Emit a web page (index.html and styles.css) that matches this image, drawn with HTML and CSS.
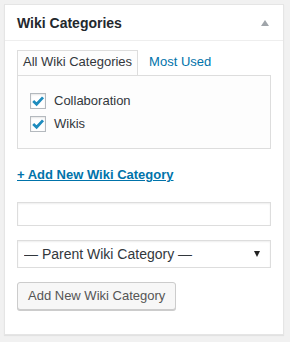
FILE: index.html
```html
<!DOCTYPE html>
<html lang="en">
<head>
    <meta charset="UTF-8">
    <meta name="viewport" content="width=device-width, initial-scale=1.0">
    <title>Wiki Categories</title>
    <link rel="stylesheet" href="styles.css">
</head>
<body>
    <div class="postbox">
        <div class="postbox-header">
            <h2>Wiki Categories</h2>
            <span class="toggle-arrow"></span>
        </div>

        <div class="inside">
            <ul class="category-tabs">
                <li class="tab active">All Wiki Categories</li>
                <li class="tab"><a href="#">Most Used</a></li>
            </ul>

            <div class="tabs-panel">
                <ul class="category-list">
                    <li>
                        <span class="check">
                            <svg width="14" height="14" viewBox="0 0 14 14"><path d="M2.2 7 L5.6 10.2 L12 3.4" fill="none" stroke="#1e8cbe" stroke-width="2.8"/></svg>
                        </span>
                        Collaboration
                    </li>
                    <li>
                        <span class="check">
                            <svg width="14" height="14" viewBox="0 0 14 14"><path d="M2.2 7 L5.6 10.2 L12 3.4" fill="none" stroke="#1e8cbe" stroke-width="2.8"/></svg>
                        </span>
                        Wikis
                    </li>
                </ul>
            </div>

            <a class="add-toggle" href="#">+ Add New Wiki Category</a>

            <input type="text" class="new-category">

            <div class="select-wrap">
                <select class="parent-select">
                    <option>— Parent Wiki Category —</option>
                </select>
            </div>

            <button class="button">Add New Wiki Category</button>
        </div>
    </div>
</body>
</html>
```

FILE: styles.css
```css
body {
    margin: 0;
    padding: 4px 6px 6px 4px;
    background-color: #f1f1f1;
    font-family: "Liberation Sans", Arial, sans-serif;
    font-size: 13px;
    color: #32373c;
}
.postbox {
    width: 278px;
    background-color: #fff;
    border: 1px solid #e5e5e5;
    box-shadow: 0 1px 1px rgba(0, 0, 0, 0.06);
}
.postbox-header {
    display: flex;
    align-items: center;
    justify-content: space-between;
    height: 35px;
    padding: 0 14px 0 12px;
    border-bottom: 1px solid #eee;
}
.postbox-header h2 {
    margin: 0;
    font-size: 14px;
    font-weight: bold;
    color: #23282d;
}
.toggle-arrow {
    width: 0;
    height: 0;
    border-left: 4px solid transparent;
    border-right: 4px solid transparent;
    border-bottom: 6px solid #a0a5aa;
    margin-top: 1px;
}
.inside {
    padding: 9px 12px 24px;
}
.category-tabs {
    display: flex;
    margin: 0;
    padding: 0;
    list-style: none;
}
.tab {
    padding: 3px 5px 5px;
    line-height: 16px;
    border: 1px solid transparent;
    border-bottom: none;
    margin-right: 5px;
}
.tab.active {
    border-color: #ddd;
    background-color: #fdfdfd;
}
.tab a {
    color: #0073aa;
    text-decoration: none;
}
.tabs-panel {
    border: 1px solid #ddd;
    background-color: #fdfdfd;
    padding: 17px 12px 16px;
}
.category-list {
    margin: 0;
    padding: 0;
    list-style: none;
    display: flex;
    flex-direction: column;
    gap: 7px;
}
.category-list li {
    display: flex;
    align-items: center;
    gap: 8px;
    height: 16px;
    line-height: 16px;
}
.check {
    display: flex;
    align-items: center;
    justify-content: center;
    width: 14px;
    height: 14px;
    border: 1px solid #b4b9be;
    background-color: #fff;
    box-shadow: inset 0 1px 2px rgba(0, 0, 0, 0.1);
}
.add-toggle {
    display: block;
    margin-top: 16px;
    line-height: 19px;
    font-weight: bold;
    color: #0073aa;
    text-decoration: underline;
}
.new-category {
    display: block;
    box-sizing: border-box;
    width: 100%;
    height: 24px;
    margin: 18px 0 0;
    border: 1px solid #ddd;
    box-shadow: inset 0 1px 2px rgba(0, 0, 0, 0.07);
    background-color: #fff;
    font: inherit;
}
.select-wrap {
    position: relative;
    margin-top: 14px;
}
.select-wrap::after {
    content: "";
    position: absolute;
    right: 11px;
    top: 11px;
    border-left: 3px solid transparent;
    border-right: 3px solid transparent;
    border-top: 6px solid #222;
    pointer-events: none;
}
.parent-select {
    display: block;
    box-sizing: border-box;
    width: 100%;
    height: 28px;
    padding: 0 20px 0 6px;
    border: 1px solid #ddd;
    border-radius: 0;
    box-shadow: inset 0 1px 2px rgba(0, 0, 0, 0.07);
    background-color: #fff;
    color: #32373c;
    font: inherit;
    font-size: 14px;
    -webkit-appearance: none;
    appearance: none;
}
.button {
    display: block;
    margin-top: 14px;
    height: 28px;
    padding: 0 10px 1px;
    border: 1px solid #ccc;
    border-radius: 3px;
    background-color: #f7f7f7;
    box-shadow: 0 1px 0 #ccc;
    color: #555;
    font: inherit;
    font-size: 13px;
    cursor: pointer;
}
```
